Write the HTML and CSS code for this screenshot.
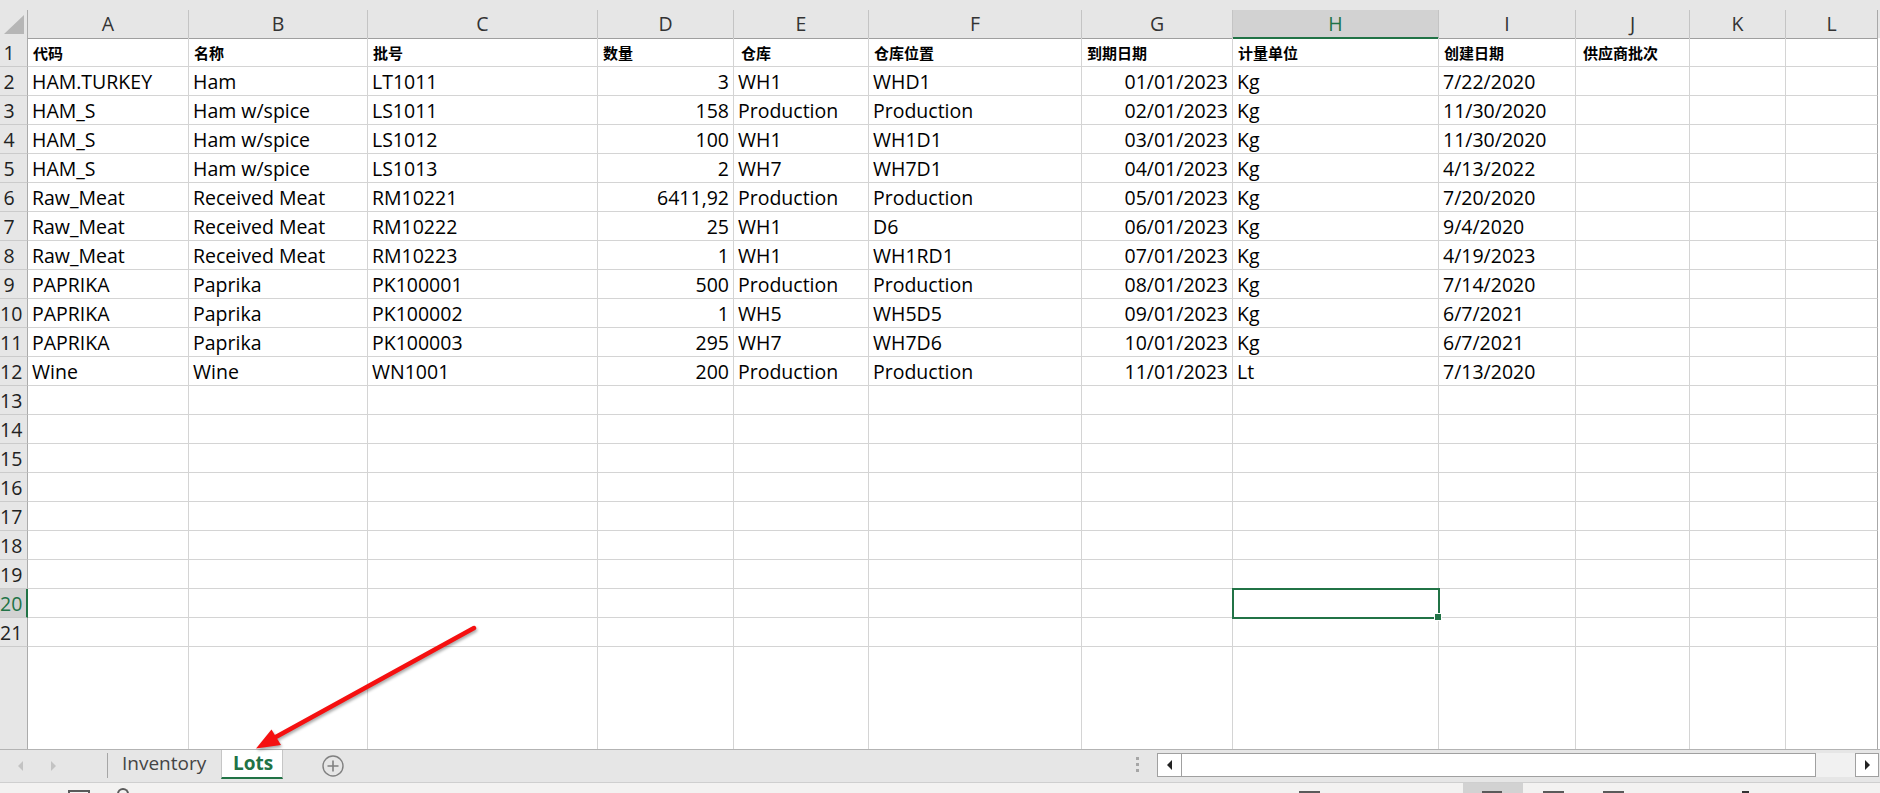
FILE: index.html
```html
<!DOCTYPE html>
<html lang="zh">
<head>
<meta charset="utf-8">
<title>Lots</title>
<link rel="stylesheet" href="styles.css">
</head>
<body>
<div class="app">
  <div class="top"></div>
  <div class="row head">
    <div class="corner"><svg width="27" height="27" viewBox="0 0 27 27"><polygon points="24,5 24,24 4,24" fill="#b6b6b6"/></svg></div>
    <div>A</div><div>B</div><div>C</div><div>D</div><div>E</div><div>F</div><div>G</div><div class="selc">H</div><div>I</div><div>J</div><div>K</div><div>L</div><div class="x"></div>
  </div>
  <div class="row"><div class="rh">1</div><div class="zh">代码</div><div class="zh">名称</div><div class="zh">批号</div><div class="zh">数量</div><div class="zh p7">仓库</div><div class="zh">仓库位置</div><div class="zh">到期日期</div><div class="zh">计量单位</div><div class="zh">创建日期</div><div class="zh p7">供应商批次</div><div></div><div></div><div class="x"></div></div>
  <div class="row"><div class="rh">2</div><div>HAM.TURKEY</div><div>Ham</div><div>LT1011</div><div class="n">3</div><div>WH1</div><div>WHD1</div><div class="n">01/01/2023</div><div>Kg</div><div>7/22/2020</div><div></div><div></div><div></div><div class="x"></div></div>
  <div class="row"><div class="rh">3</div><div>HAM_S</div><div>Ham w/spice</div><div>LS1011</div><div class="n">158</div><div>Production</div><div>Production</div><div class="n">02/01/2023</div><div>Kg</div><div>11/30/2020</div><div></div><div></div><div></div><div class="x"></div></div>
  <div class="row"><div class="rh">4</div><div>HAM_S</div><div>Ham w/spice</div><div>LS1012</div><div class="n">100</div><div>WH1</div><div>WH1D1</div><div class="n">03/01/2023</div><div>Kg</div><div>11/30/2020</div><div></div><div></div><div></div><div class="x"></div></div>
  <div class="row"><div class="rh">5</div><div>HAM_S</div><div>Ham w/spice</div><div>LS1013</div><div class="n">2</div><div>WH7</div><div>WH7D1</div><div class="n">04/01/2023</div><div>Kg</div><div>4/13/2022</div><div></div><div></div><div></div><div class="x"></div></div>
  <div class="row"><div class="rh">6</div><div>Raw_Meat</div><div>Received Meat</div><div>RM10221</div><div class="n">6411,92</div><div>Production</div><div>Production</div><div class="n">05/01/2023</div><div>Kg</div><div>7/20/2020</div><div></div><div></div><div></div><div class="x"></div></div>
  <div class="row"><div class="rh">7</div><div>Raw_Meat</div><div>Received Meat</div><div>RM10222</div><div class="n">25</div><div>WH1</div><div>D6</div><div class="n">06/01/2023</div><div>Kg</div><div>9/4/2020</div><div></div><div></div><div></div><div class="x"></div></div>
  <div class="row"><div class="rh">8</div><div>Raw_Meat</div><div>Received Meat</div><div>RM10223</div><div class="n">1</div><div>WH1</div><div>WH1RD1</div><div class="n">07/01/2023</div><div>Kg</div><div>4/19/2023</div><div></div><div></div><div></div><div class="x"></div></div>
  <div class="row"><div class="rh">9</div><div>PAPRIKA</div><div>Paprika</div><div>PK100001</div><div class="n">500</div><div>Production</div><div>Production</div><div class="n">08/01/2023</div><div>Kg</div><div>7/14/2020</div><div></div><div></div><div></div><div class="x"></div></div>
  <div class="row"><div class="rh">10</div><div>PAPRIKA</div><div>Paprika</div><div>PK100002</div><div class="n">1</div><div>WH5</div><div>WH5D5</div><div class="n">09/01/2023</div><div>Kg</div><div>6/7/2021</div><div></div><div></div><div></div><div class="x"></div></div>
  <div class="row"><div class="rh">11</div><div>PAPRIKA</div><div>Paprika</div><div>PK100003</div><div class="n">295</div><div>WH7</div><div>WH7D6</div><div class="n">10/01/2023</div><div>Kg</div><div>6/7/2021</div><div></div><div></div><div></div><div class="x"></div></div>
  <div class="row"><div class="rh">12</div><div>Wine</div><div>Wine</div><div>WN1001</div><div class="n">200</div><div>Production</div><div>Production</div><div class="n">11/01/2023</div><div>Lt</div><div>7/13/2020</div><div></div><div></div><div></div><div class="x"></div></div>
  <div class="row"><div class="rh">13</div><div></div><div></div><div></div><div></div><div></div><div></div><div></div><div></div><div></div><div></div><div></div><div></div><div class="x"></div></div>
  <div class="row"><div class="rh">14</div><div></div><div></div><div></div><div></div><div></div><div></div><div></div><div></div><div></div><div></div><div></div><div></div><div class="x"></div></div>
  <div class="row"><div class="rh">15</div><div></div><div></div><div></div><div></div><div></div><div></div><div></div><div></div><div></div><div></div><div></div><div></div><div class="x"></div></div>
  <div class="row"><div class="rh">16</div><div></div><div></div><div></div><div></div><div></div><div></div><div></div><div></div><div></div><div></div><div></div><div></div><div class="x"></div></div>
  <div class="row"><div class="rh">17</div><div></div><div></div><div></div><div></div><div></div><div></div><div></div><div></div><div></div><div></div><div></div><div></div><div class="x"></div></div>
  <div class="row"><div class="rh">18</div><div></div><div></div><div></div><div></div><div></div><div></div><div></div><div></div><div></div><div></div><div></div><div></div><div class="x"></div></div>
  <div class="row"><div class="rh">19</div><div></div><div></div><div></div><div></div><div></div><div></div><div></div><div></div><div></div><div></div><div></div><div></div><div class="x"></div></div>
  <div class="row"><div class="rh selr">20</div><div></div><div></div><div></div><div></div><div></div><div></div><div></div><div class="active"><span class="sel"><span class="fh"></span></span></div><div></div><div></div><div></div><div></div><div class="x"></div></div>
  <div class="row"><div class="rh">21</div><div></div><div></div><div></div><div></div><div></div><div></div><div></div><div></div><div></div><div></div><div></div><div></div><div class="x"></div></div>
  <div class="fill"><div class="rh"></div><div></div><div></div><div></div><div></div><div></div><div></div><div></div><div></div><div></div><div></div><div></div><div></div><div class="x"></div></div>

  <div class="tabbar">
    <div class="nav"><span class="al"></span><span class="ar"></span></div>
    <div class="sep"></div>
    <div class="tab">Inventory</div>
    <div class="tab on">Lots</div>
    <svg class="plus" width="22" height="22" viewBox="0 0 22 22"><circle cx="11" cy="11" r="10" fill="none" stroke="#808080" stroke-width="1.4"/><path d="M11 5.5v11M5.5 11h11" stroke="#808080" stroke-width="1.6"/></svg>
    <div class="dots"><i></i><i></i><i></i></div>
    <div class="hscroll">
      <div class="sbtn"><span class="tl"></span></div>
      <div class="thumb"></div>
      <div class="track"></div>
      <div class="sbtn r"><span class="tr"></span></div>
    </div>
  </div>
  <div class="status">
    <span class="si s1"></span>
    <span class="si s2"></span>
    <span class="si s3"></span>
    <span class="hl"><span class="si s4"></span></span>
    <span class="si s5"></span>
    <span class="si s6"></span>
    <span class="mk"></span>
  </div>

  <svg class="arrow" width="1880" height="793" viewBox="0 0 1880 793">
    <line x1="474" y1="628" x2="274" y2="738" stroke="#f51010" stroke-width="4.5" stroke-linecap="round"/>
    <polygon points="256,748.5 271.5,729.5 281,745" fill="#f51010"/>
  </svg>
</div>
</body>
</html>
```
FILE: styles.css
```css
* { box-sizing: border-box; margin: 0; padding: 0; }
html, body { width: 1880px; height: 793px; overflow: hidden; background: #fff; }
body { font-family: "Open Sans", "Noto Sans CJK SC", sans-serif; font-size: 19px; color: #000; }

.app { position: relative; display: flex; flex-direction: column; width: 1880px; height: 793px; }
.top { flex: none; height: 10px; background: #e6e6e6; }

.row, .fill {
  display: grid;
  grid-template-columns: 28px 161px 179px 230px 136px 135px 213px 151px 206px 137px 114px 96px 92px 1fr;
  flex: none;
}
.row { height: 29px; font-size: 19.5px; }
.row > div {
  border-right: 1px solid #d4d4d4;
  border-bottom: 1px solid #d4d4d4;
  padding: 2px 4px 0 4px;
  line-height: 26px;
  white-space: nowrap;
}
.row > div.n { text-align: right; }
.row > div:nth-child(13) { border-right-color: #a8a8a8; }
.row > .x { border: none; }
.row > .rh {
  background: #e6e6e6;
  border-right-color: #ababab;
  border-bottom-color: #cbcbcb;
  text-align: center;
  padding: 2px 9px 0 0;
  color: #222;
}
.row > .selr { background: #d2d2d2; color: #217346; border-right: 2px solid #217346; }

.head { height: 28px; background: #e6e6e6; }
.head > div {
  border-right-color: #c4c4c4;
  border-bottom-color: #9f9f9f;
  text-align: center;
  padding: 1px 0 0 0;
  line-height: 26px;
  color: #333;
}
.head > .corner { padding: 0; border-right-color: #ababab; }
.head > .corner svg { display: block; }
.head > .selc { background: #d2d2d2; color: #217346; border-bottom: 2px solid #217346; }
.head > .x { border: none; }

.row > .zh {
  font-family: "Noto Sans CJK SC", sans-serif;
  font-weight: 700;
  font-size: 15px;
  padding-left: 5px;
}
.row > .p7 { padding-left: 7px; }

.row > .active { position: relative; }
.sel {
  position: absolute;
  left: -1px; top: -1px; right: -2px; bottom: -2px;
  border: 2px solid #217346;
}
.fh {
  position: absolute;
  right: -4px; bottom: -4px;
  width: 8px; height: 8px;
  background: #217346;
  border: 1px solid #fff;
}

.fill { flex: 1 1 auto; grid-template-rows: 100%; }
.fill > div { border-right: 1px solid #d4d4d4; }
.fill > .rh { background: #e6e6e6; border-right-color: #ababab; }
.fill > div:nth-child(13) { border-right-color: #a8a8a8; }
.fill > .x { border: none; }

.tabbar {
  flex: none;
  height: 34px;
  display: flex;
  align-items: flex-start;
  background: #e6e6e6;
  border-top: 1px solid #b3b3b3;
  border-bottom: 1px solid #cfcfcf;
}
.nav { width: 107px; height: 32px; display: flex; align-items: center; padding-left: 18px; gap: 28px; }
.al, .ar { width: 0; height: 0; border-top: 5px solid transparent; border-bottom: 5px solid transparent; }
.al { border-right: 5px solid #c3c3c3; }
.ar { border-left: 5px solid #c3c3c3; }
.sep { width: 1px; height: 25px; margin-top: 3px; background: #a6a6a6; }
.tab { width: 113px; height: 29px; padding-left: 14px; line-height: 26px; color: #444; }
.tab.on {
  width: 62px;
  padding-left: 11px;
  background: #fff;
  border-left: 1px solid #c6c6c6;
  border-right: 1px solid #c6c6c6;
  border-bottom: 2px solid #217346;
  color: #217346;
  font-weight: 700;
}
.plus { margin-left: 39px; margin-top: 5px; display: block; }
.dots { margin-left: auto; margin-right: 18px; margin-top: 7px; width: 3px; display: flex; flex-direction: column; gap: 3px; }
.dots i { display: block; width: 3px; height: 3px; background: #a6a6a6; }
.hscroll { width: 722px; height: 24px; margin-top: 3px; margin-right: 1px; display: flex; }
.sbtn { width: 25px; height: 24px; border: 1px solid #a0a0a0; background: #fff; display: flex; align-items: center; justify-content: center; }
.sbtn.r { width: 24px; }
.tl, .tr { width: 0; height: 0; border-top: 5px solid transparent; border-bottom: 5px solid transparent; }
.tl { border-right: 5px solid #222; }
.tr { border-left: 5px solid #222; }
.thumb { width: 634px; height: 24px; background: #fff; border: 1px solid #a0a0a0; border-left: none; }
.track { flex: 1; height: 24px; background: #f1f1f1; }

.status { flex: none; height: 10px; background: #f3f2f1; display: flex; align-items: flex-start; overflow: hidden; }
.si { display: block; margin-top: 7px; height: 6px; border: 2px solid #5a5a5a; border-bottom: none; }
.s1 { margin-left: 68px; width: 22px; }
.s2 { margin-left: 27px; width: 12px; margin-top: 5px; border-radius: 6px 6px 0 0; }
.s3 { margin-left: 1170px; width: 21px; margin-top: 8px; }
.hl { display: flex; align-items: flex-start; margin-left: 143px; width: 60px; height: 10px; background: #d2d2d2; }
.s4 { margin-left: 19px; width: 20px; margin-top: 8px; }
.s5 { margin-left: 20px; width: 21px; margin-top: 8px; }
.s6 { margin-left: 39px; width: 21px; margin-top: 8px; }
.mk { display: block; margin-left: 118px; margin-top: 8px; width: 7px; height: 2px; background: #333; }

.arrow { position: absolute; left: 0; top: 0; pointer-events: none; filter: drop-shadow(1px 2px 1.5px rgba(0, 0, 0, 0.35)); }
```
